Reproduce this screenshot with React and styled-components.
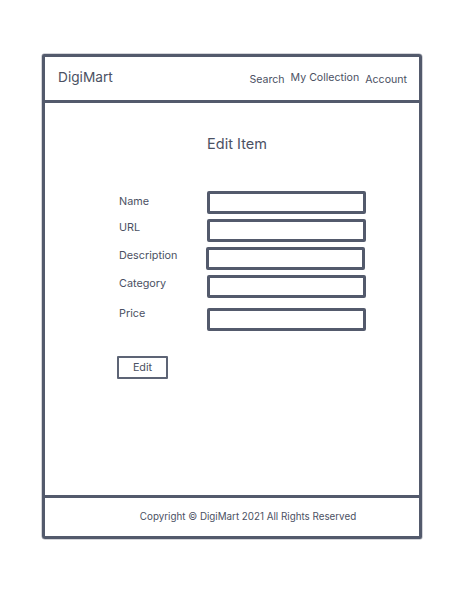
import React from 'react';
import styled, { createGlobalStyle } from 'styled-components';

const ink = '#535a6c';

const GlobalStyle = createGlobalStyle`
  html, body {
    margin: 0;
    padding: 0;
    background: #ffffff;
  }
  body {
    font-family: Inter, 'Noto Sans', sans-serif;
    color: #4b5163;
  }
`;

// Styled Components
const Page = styled.div`
  width: 463px;
  height: 591px;
  padding: 54px 0 0 42px;
  box-sizing: border-box;
`;

const Frame = styled.div`
  width: 380px;
  height: 485px;
  box-sizing: border-box;
  border: 3px solid ${ink};
  border-radius: 2px 3px 2px 3px;
  display: flex;
  flex-direction: column;
  box-shadow: 0 0 0 0.5px rgba(83, 90, 108, 0.5);
`;

const Header = styled.header`
  height: 46px;
  box-sizing: border-box;
  border-bottom: 3px solid ${ink};
  display: flex;
  align-items: center;
  justify-content: space-between;
  padding: 0 12px 0 13px;
`;

const Brand = styled.div`
  font-size: 13.7px;
  margin-top: -3px;
`;

const Nav = styled.nav`
  display: flex;
  gap: 6px;
  font-size: 10.6px;
`;

const NavLink = styled.span`
  margin-top: ${(p) => p.lift || 0}px;
`;

const Main = styled.main`
  flex: 1;
  display: flex;
  flex-direction: column;
`;

const Title = styled.h1`
  margin: 31px 0 0 0;
  text-align: center;
  font-size: 14.5px;
  font-weight: 400;
  line-height: 20px;
  padding-left: 10px;
`;

const Form = styled.div`
  margin: 37px 0 0 74px;
  display: flex;
  flex-direction: column;
  gap: 5px;
`;

const Row = styled.div`
  display: flex;
  align-items: flex-start;
  margin-top: ${(p) => p.offset || 0}px;
`;

const Label = styled.label`
  width: 88px;
  font-size: 10.8px;
  line-height: 14px;
  margin-top: ${(p) => p.drop}px;
`;

const Input = styled.div`
  width: 159px;
  height: 23px;
  box-sizing: border-box;
  border: 3px solid ${ink};
  border-radius: 2px;
  margin-left: ${(p) => p.shift || 0}px;
`;

const Button = styled.div`
  margin: 25px 0 0 72px;
  width: 51px;
  height: 23px;
  box-sizing: border-box;
  border: 2px solid #5d6475;
  border-radius: 1px;
  display: flex;
  align-items: center;
  justify-content: center;
  font-size: 10.8px;
`;

const Footer = styled.footer`
  height: 41px;
  box-sizing: border-box;
  border-top: 3px solid ${ink};
  display: flex;
  align-items: center;
  justify-content: center;
  font-size: 9.8px;
  padding: 0 0 1px 32px;
`;

const fields = [
  { label: 'Name', drop: 4, shift: 0 },
  { label: 'URL', drop: 2, shift: 0 },
  { label: 'Description', drop: 2, shift: -1 },
  { label: 'Category', drop: 2, shift: 0 },
  { label: 'Price', drop: -1, shift: 0, offset: 5 },
];

export default function App() {
  return (
    <>
      <GlobalStyle />
      <Page>
        <Frame>
          <Header>
            <Brand>DigiMart</Brand>
            <Nav>
              <NavLink lift={2}>Search</NavLink>
              <NavLink>My Collection</NavLink>
              <NavLink lift={2}>Account</NavLink>
            </Nav>
          </Header>
          <Main>
            <Title>Edit Item</Title>
            <Form>
              {fields.map((f) => (
                <Row key={f.label} offset={f.offset}>
                  <Label drop={f.drop}>{f.label}</Label>
                  <Input shift={f.shift} />
                </Row>
              ))}
            </Form>
            <Button>Edit</Button>
          </Main>
          <Footer>Copyright © DigiMart 2021 All Rights Reserved</Footer>
        </Frame>
      </Page>
    </>
  );
}
